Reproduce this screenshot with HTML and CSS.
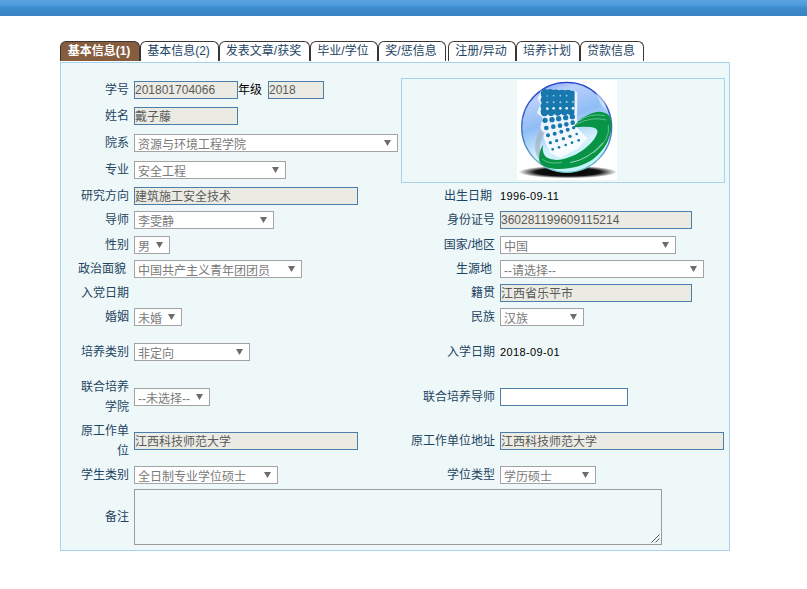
FILE: index.html
```html
<!DOCTYPE html>
<html lang="zh-CN">
<head>
<meta charset="utf-8">
<title>基本信息</title>
<link rel="stylesheet" href="styles.css">
</head>
<body>
<header class="topbar"></header>
<main class="page">
  <nav class="tabs">
    <a class="tab w80 active">基本信息(1)</a>
    <a class="tab w79">基本信息(2)</a>
    <a class="tab w91">发表文章/获奖</a>
    <a class="tab w68">毕业/学位</a>
    <a class="tab w68 gap">奖/惩信息</a>
    <a class="tab w68">注册/异动</a>
    <a class="tab w64">培养计划</a>
    <a class="tab w64">贷款信息</a>
  </nav>
  <section class="panel">
    <div class="label">学号</div>
    <div class="cell"><span class="input w104">201801704066</span><span class="grade">年级</span><span class="input w56">2018</span></div>
    <div class="photo">
      <svg class="logo" viewBox="0 0 300 300">
        <defs>
          <linearGradient id="ball" x1="0" y1="0" x2=".35" y2="1">
            <stop offset="0" stop-color="#5b86ee"/>
            <stop offset=".22" stop-color="#b9d0fb"/>
            <stop offset=".5" stop-color="#8fbdf5"/>
            <stop offset=".78" stop-color="#d5effd"/>
            <stop offset="1" stop-color="#c0f4f8"/>
          </linearGradient>
          <linearGradient id="rim" x1="0" y1="0" x2="0" y2="1">
            <stop offset="0" stop-color="#2341c8"/>
            <stop offset=".6" stop-color="#4c78cc"/>
            <stop offset="1" stop-color="#72c4c6"/>
          </linearGradient>
          <radialGradient id="shade">
            <stop offset="0" stop-color="#000"/>
            <stop offset=".65" stop-color="#111"/>
            <stop offset="1" stop-color="#fff"/>
          </radialGradient>
        </defs>
        <rect width="300" height="300" fill="#fff"/>
        <ellipse cx="152" cy="276" rx="148" ry="19" fill="url(#shade)"/>
        <circle cx="149" cy="142" r="135" fill="url(#ball)" stroke="url(#rim)" stroke-width="4"/>
        <path d="M72 31L62 55L70 72L60 100L76 112L70 142L86 190L102 220L130 233L184 205L211 175L180 142L181 38L169 30Z" fill="#fff" opacity=".8"/>
        <path d="M235 34Q266 58 270 92L253 76Z" fill="#fff" opacity=".5"/>
        <path d="M70 150C48 184 50 218 70 245L78 238C64 215 66 185 84 158Z" fill="#a3b4c2" opacity=".7"/>
        <path d="M76 29Q84 25 92 29Q101 25 109 30Q117 26 126 31Q136 27 144 31Q154 27 163 32Q175 30 173 42L172 101Q160 108 153 101Q142 109 134 101Q124 109 115 101Q105 109 97 102Q77 113 72 101Q68 94 73 86Q67 78 74 69Q67 60 74 51Q67 38 76 29Z" fill="#1877ad"/>
        <g fill="#9fd0e6">
          <circle cx="91" cy="48" r="2.5"/><circle cx="110" cy="47" r="2.5"/><circle cx="130" cy="47" r="2.5"/><circle cx="149" cy="47" r="2.5"/>
          <circle cx="91" cy="67" r="3"/><circle cx="110" cy="67" r="3"/><circle cx="130" cy="67" r="3"/><circle cx="149" cy="66" r="3"/><circle cx="168" cy="66" r="3"/>
        </g>
        <g fill="#e9f7fc">
          <circle cx="91" cy="86" r="4"/><circle cx="110" cy="85" r="4"/><circle cx="130" cy="85" r="4"/><circle cx="149" cy="85" r="4"/><circle cx="168" cy="85" r="4"/>
        </g>
        <g fill="#1877ad">
          <rect x="74" y="94" width="16" height="15" rx="6"/><rect x="94" y="93" width="16" height="15" rx="6"/><rect x="114" y="92" width="16" height="15" rx="6"/><rect x="134" y="91" width="16" height="15" rx="6"/><rect x="154" y="91" width="17" height="15" rx="6"/>
          <circle cx="84" cy="121" r="8"/><circle cx="105" cy="119" r="8"/><circle cx="125" cy="116" r="8"/><circle cx="146" cy="113" r="8"/><circle cx="166" cy="110" r="8"/>
          <circle cx="88" cy="144" r="7"/><circle cx="109" cy="140" r="7"/><circle cx="129" cy="137" r="7"/><circle cx="148" cy="133" r="7"/><circle cx="167" cy="128" r="7"/>
          <circle cx="93" cy="166" r="6"/><circle cx="113" cy="161" r="6"/><circle cx="133" cy="155" r="6"/><circle cx="152" cy="149" r="6"/><circle cx="170" cy="143" r="5"/>
          <circle cx="100" cy="188" r="5"/><circle cx="119" cy="182" r="5"/><circle cx="139" cy="176" r="5"/><circle cx="159" cy="169" r="5"/><circle cx="179" cy="162" r="4"/>
          <circle cx="107" cy="208" r="4"/><circle cx="126" cy="202" r="4"/><circle cx="146" cy="195" r="4"/><circle cx="165" cy="188" r="4"/><circle cx="185" cy="181" r="4"/>
        </g>
        <path d="M170 142C182 120 205 106 229 98Q250 91 270 101Q286 111 283 145C280 181 257 216 229 237C198 260 149 270 110 266Q73 262 67 243Q64 216 78 195Q74 220 88 232Q108 245 140 237C183 227 225 195 238 166Q246 151 235 145Q217 138 170 142Z" fill="#079447"/>
        <path d="M178 133Q224 108 268 120M188 122Q220 98 264 107M274 135Q282 177 230 219M76 238Q96 254 135 247" fill="none" stroke="#c9f0d6" stroke-width="2" opacity=".7"/>
        <path d="M258 188Q216 238 160 248" fill="none" stroke="#e1fae9" stroke-width="2.5" opacity=".85"/>
      </svg>
    </div>

    <div class="label">姓名</div><div class="cell"><span class="input cjk w104">戴子藤</span></div>
    <div class="label">院系</div><div class="cell"><span class="select w264">资源与环境工程学院</span></div>
    <div class="label">专业</div><div class="cell"><span class="select w152">安全工程</span></div>

    <div class="label">研究方向</div><div class="cell"><span class="input cjk w224">建筑施工安全技术</span></div>
    <div class="label spaced">出生日期</div><div class="cell date">1996-09-11</div>

    <div class="label">导师</div><div class="cell"><span class="select w140">李雯静</span></div>
    <div class="label">身份证号</div><div class="cell"><span class="input w192">360281199609115214</span></div>

    <div class="label">性别</div><div class="cell"><span class="select w36">男</span></div>
    <div class="label">国家/地区</div><div class="cell"><span class="select w176">中国</span></div>

    <div class="label spaced">政治面貌</div><div class="cell"><span class="select w168">中国共产主义青年团团员</span></div>
    <div class="label spaced">生源地</div><div class="cell"><span class="select w204">--请选择--</span></div>

    <div class="label">入党日期</div><div class="cell"></div>
    <div class="label">籍贯</div><div class="cell"><span class="input cjk w192">江西省乐平市</span></div>

    <div class="label">婚姻</div><div class="cell"><span class="select w48">未婚</span></div>
    <div class="label">民族</div><div class="cell"><span class="select w84">汉族</span></div>

    <div class="label">培养类别</div><div class="cell"><span class="select w116">非定向</span></div>
    <div class="label">入学日期</div><div class="cell date">2018-09-01</div>

    <div class="label">联合培养<br>学院</div><div class="cell"><span class="select w76">--未选择--</span></div>
    <div class="label">联合培养导师</div><div class="cell"><span class="input editable w128"></span></div>

    <div class="label">原工作单<br>位</div><div class="cell"><span class="input cjk w224">江西科技师范大学</span></div>
    <div class="label">原工作单位地址</div><div class="cell"><span class="input cjk w224">江西科技师范大学</span></div>

    <div class="label">学生类别</div><div class="cell"><span class="select w144">全日制专业学位硕士</span></div>
    <div class="label">学位类型</div><div class="cell"><span class="select w96">学历硕士</span></div>

    <div class="label">备注</div>
    <div class="cell wide">
      <div class="textarea"><svg class="grip" viewBox="0 0 9 9"><path d="M.5 8.5L8.5 .5M4.5 8.5L8.5 4.5"/></svg></div>
    </div>
  </section>
</main>
</body>
</html>
```
FILE: styles.css
```css
* { box-sizing: border-box; }

body {
  margin: 0;
  background: #fff;
  font: 12px/20px "Liberation Sans", "Noto Sans CJK SC", sans-serif;
  color: #1d4463;
}

.topbar {
  height: 16px;
  background: linear-gradient(#5aa4e0 0%, #4b9add 35%, #3c8dd0 45%, #3882c0 100%);
}

.page {
  width: 670px;
  margin: 25px 0 0 60px;
}

.tabs {
  display: flex;
  height: 21px;
}

.tab {
  height: 20px;
  padding-right: 2px;
  border: 1px solid #3c3632;
  border-bottom: 0;
  border-radius: 6px 6px 0 0;
  text-align: center;
  line-height: 18px;
  white-space: nowrap;
}

.tab.active {
  background: #865d3f;
  color: #fff;
  font-weight: bold;
}

.tab.gap { margin-right: 2px; }

.panel {
  display: grid;
  grid-template-columns: 73px 267px 99px 229px;
  grid-template-rows: 26px 26px 28px 26px 26px 22px 28px 20px 28px 20px 50px 40px 48px 20px 64px;
  height: 489px;
  padding-top: 14px;
  border: 1px solid #a6d2ee;
  background: #eff8f8;
}

.label {
  align-self: center;
  padding-right: 5px;
  text-align: right;
  white-space: nowrap;
}

.label.spaced { padding-right: 8px; }

.cell {
  display: flex;
  align-items: center;
}

.cell.wide { grid-column: 2 / 5; }

.date {
  color: #000;
  font-size: 11px;
  letter-spacing: 0.37px;
}

.grade {
  width: 30px;
  color: #000;
}

.input,
.select {
  display: block;
  height: 18px;
  white-space: nowrap;
}

.input {
  border: 1px solid #4b7eaa;
  background: #ebebe4;
  color: #5a5a5a;
  line-height: 16px;
}

.input.cjk { line-height: 18px; }

.input.editable { background: #fff; }

.select {
  display: flex;
  justify-content: space-between;
  padding: 0 6px 0 3px;
  border: 1px solid #a3a3a3;
  background: #fff;
  color: #7a7a7a;
  line-height: 20px;
}

.select::after {
  content: "";
  flex: none;
  width: 7px;
  height: 6px;
  margin-top: 5px;
  background: #6c6c6c;
  clip-path: polygon(0 0, 100% 0, 50% 100%);
}

.photo {
  grid-column: 3 / 5;
  grid-row: 1 / 5;
  width: 324px;
  height: 105px;
  margin-top: 1px;
  padding: 1px 0 0 115px;
  border: 1px solid #a6d2ee;
}

.logo {
  display: block;
  width: 100px;
  height: 100px;
}

.textarea {
  display: flex;
  align-items: flex-end;
  justify-content: flex-end;
  width: 528px;
  height: 56px;
  padding: 1px;
  border: 1px solid #9c9c9c;
}

.grip {
  width: 9px;
  height: 9px;
  fill: none;
  stroke: #555;
  stroke-width: 1;
}

.w36 { width: 36px; }
.w48 { width: 48px; }
.w56 { width: 56px; }
.w64 { width: 64px; }
.w68 { width: 68px; }
.w76 { width: 76px; }
.w79 { width: 79px; }
.w80 { width: 80px; }
.w84 { width: 84px; }
.w91 { width: 91px; }
.w96 { width: 96px; }
.w104 { width: 104px; }
.w116 { width: 116px; }
.w128 { width: 128px; }
.w140 { width: 140px; }
.w144 { width: 144px; }
.w152 { width: 152px; }
.w168 { width: 168px; }
.w176 { width: 176px; }
.w192 { width: 192px; }
.w204 { width: 204px; }
.w224 { width: 224px; }
.w264 { width: 264px; }
```
